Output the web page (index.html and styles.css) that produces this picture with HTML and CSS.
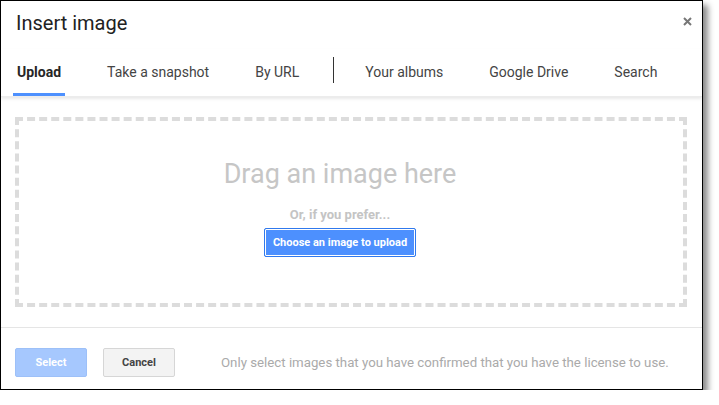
FILE: index.html
```html
<!DOCTYPE html>
<html>
<head>
<meta charset="utf-8">
<link rel="stylesheet" href="styles.css">
</head>
<body>
<div class="dialog">
  <div class="title">Insert image</div>
  <svg class="close" width="9" height="9" viewBox="0 0 9 9"><path d="M1 1L8 8M8 1L1 8" stroke="#777" stroke-width="2"/></svg>
  <div class="tabs">
    <div class="tab active">Upload</div>
    <div class="tab">Take a snapshot</div>
    <div class="tab last">By URL</div>
    <div class="sep"></div>
    <div class="tab">Your albums</div>
    <div class="tab">Google Drive</div>
    <div class="tab">Search</div>
  </div>
  <div class="drop">
    <div class="drag">Drag an image here</div>
    <div class="prefer">Or, if you prefer...</div>
    <button class="choose">Choose an image to upload</button>
  </div>
  <div class="footer">
    <button class="btn select">Select</button>
    <button class="btn cancel">Cancel</button>
    <div class="note">Only select images that you have confirmed that you have the license to use.</div>
  </div>
</div>
</body>
</html>
```
FILE: styles.css
```css
html, body { margin: 0; padding: 0; background: #fff; }
body { font-family: Roboto, "Liberation Sans", sans-serif; }
.dialog {
  position: relative;
  width: 701px;
  height: 388px;
  border: 1px solid #000;
  background: #fff;
  box-shadow: 5px 5px 6px rgba(0,0,0,0.45);
  display: flex;
  flex-direction: column;
}
.title {
  padding: 10px 0 0 15px;
  font-size: 20px;
  line-height: 24px;
  color: #222;
}
.close { position: absolute; top: 16px; right: 10px; }
.tabs {
  margin-top: 14px;
  display: flex;
  padding-left: 12px;
  box-shadow: 0 2px 3px rgba(0,0,0,0.09);
  border-bottom: 1px solid #ececec;
}
.tab {
  padding: 15px 4px 12px;
  margin-right: 38px;
  font-size: 14px;
  line-height: 17px;
  color: #444;
  border-bottom: 3px solid transparent;
  white-space: nowrap;
}
.tab.last { margin-right: 30px; }
.tab.active { font-weight: bold; color: #262626; border-bottom-color: #4d90fe; }
.sep {
  align-self: flex-start;
  margin-top: 8px;
  width: 1px;
  height: 26px;
  background: #333;
  margin-right: 27px;
}
.drop {
  margin: 20px 15px 0 14px;
  border: 4px dashed #dcdcdc;
  display: flex;
  flex-direction: column;
  align-items: center;
  padding: 37px 22px 0 0;
  box-sizing: content-box;
  height: 145px;
}
.drag { font-size: 27px; line-height: 32px; color: #c6c6c6; }
.prefer { margin-top: 17px; font-size: 13px; line-height: 16px; font-weight: bold; color: #c4c4c4; }
.choose {
  margin-top: 5px;
  height: 29px;
  width: 152px;
  padding: 0;
  font-family: inherit;
  font-size: 11px;
  font-weight: bold;
  color: #fff;
  background: #4d90fe;
  border: 1px solid #3079ed;
  border-radius: 2px;
  box-shadow: inset 0 0 0 1px #fff;
}
.footer {
  margin-top: 20px;
  border-top: 1px solid #e5e5e5;
  padding: 20px 0 0 14px;
  display: flex;
  align-items: center;
}
.btn {
  width: 72px;
  height: 29px;
  padding: 0;
  font-family: inherit;
  font-size: 11px;
  font-weight: bold;
  border-radius: 2px;
  margin-right: 16px;
}
.select { background: #a6c8fe; border: 1px solid #9dc0f8; color: #fff; }
.cancel { background: #f3f3f3; border: 1px solid #d6d6d6; color: #444; margin-right: 46px; }
.note { font-size: 13.25px; color: #aaa; white-space: nowrap; }
```
